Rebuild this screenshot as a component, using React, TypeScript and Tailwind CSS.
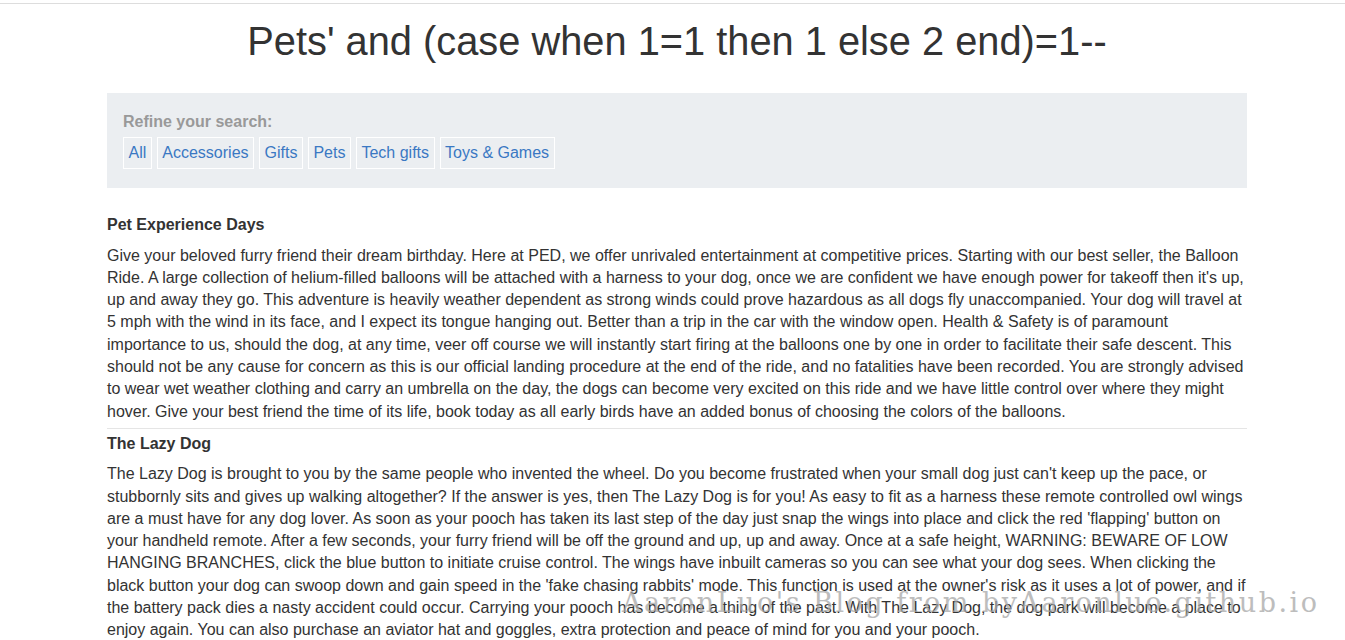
import React from 'react';

const filters = ['All', 'Accessories', 'Gifts', 'Pets', 'Tech gifts', 'Toys & Games'];

const posts = [
  {
    title: 'Pet Experience Days',
    body:
      "Give your beloved furry friend their dream birthday. Here at PED, we offer unrivaled entertainment at competitive prices. Starting with our best seller, the Balloon Ride. A large collection of helium-filled balloons will be attached with a harness to your dog, once we are confident we have enough power for takeoff then it's up, up and away they go. This adventure is heavily weather dependent as strong winds could prove hazardous as all dogs fly unaccompanied. Your dog will travel at 5 mph with the wind in its face, and I expect its tongue hanging out. Better than a trip in the car with the window open. Health & Safety is of paramount importance to us, should the dog, at any time, veer off course we will instantly start firing at the balloons one by one in order to facilitate their safe descent. This should not be any cause for concern as this is our official landing procedure at the end of the ride, and no fatalities have been recorded. You are strongly advised to wear wet weather clothing and carry an umbrella on the day, the dogs can become very excited on this ride and we have little control over where they might hover. Give your best friend the time of its life, book today as all early birds have an added bonus of choosing the colors of the balloons.",
  },
  {
    title: 'The Lazy Dog',
    body:
      "The Lazy Dog is brought to you by the same people who invented the wheel. Do you become frustrated when your small dog just can't keep up the pace, or stubbornly sits and gives up walking altogether? If the answer is yes, then The Lazy Dog is for you! As easy to fit as a harness these remote controlled owl wings are a must have for any dog lover. As soon as your pooch has taken its last step of the day just snap the wings into place and click the red 'flapping' button on your handheld remote. After a few seconds, your furry friend will be off the ground and up, up and away. Once at a safe height, WARNING: BEWARE OF LOW HANGING BRANCHES, click the blue button to initiate cruise control. The wings have inbuilt cameras so you can see what your dog sees. When clicking the black button your dog can swoop down and gain speed in the 'fake chasing rabbits' mode. This function is used at the owner's risk as it uses a lot of power, and if the battery pack dies a nasty accident could occur. Carrying your pooch has become a thing of the past. With The Lazy Dog, the dog park will become a place to enjoy again. You can also purchase an aviator hat and goggles, extra protection and peace of mind for you and your pooch.",
  },
];

export default function App() {
  return (
    <div className="relative min-h-[640px] bg-white text-[#333] font-['Liberation_Sans',Arial,sans-serif] text-[16px] leading-[22.3px] overflow-hidden">
      <div className="mt-[3px] border-t border-[#ddd]" />

      <div className="w-[1140px] ml-[107px]">
        {/* Page title */}
        <h1 className="text-center text-[39.8px] leading-[44px] mt-[15px] mb-[30px]">
          Pets' and (case when 1=1 then 1 else 2 end)=1--
        </h1>

        {/* Filter panel */}
        <section className="bg-[#ebeef1] pt-[18px] pb-[19px] px-[16px]">
          <div className="font-bold text-[#999] mb-[4px]">Refine your search:</div>
          <div className="flex gap-[5px]">
            {filters.map((f) => (
              <a
                key={f}
                href="#"
                className="border border-white px-[4.5px] h-[32px] flex items-center text-[#3a78c3]"
              >
                {f}
              </a>
            ))}
          </div>
        </section>

        {/* Posts */}
        <div className="mt-[26px]">
          {posts.map((p, i) => (
            <article key={p.title} className={i > 0 ? 'border-t border-[#e5e5e5] pt-[4px]' : ''}>
              <h3 className="font-bold mb-[8px]">{p.title}</h3>
              <p className="mb-[5px]">{p.body}</p>
            </article>
          ))}
        </div>
      </div>

      {/* Watermark overlay */}
      <div className="absolute left-[622px] top-[587px] text-[27px] leading-[32px] tracking-[2.5px] text-[#a8a8a8] opacity-75 font-['DejaVu_Serif',serif] font-light pointer-events-none whitespace-nowrap">
        AaronLuo's Blog from byAaronluo.github.io
      </div>
    </div>
  );
}
